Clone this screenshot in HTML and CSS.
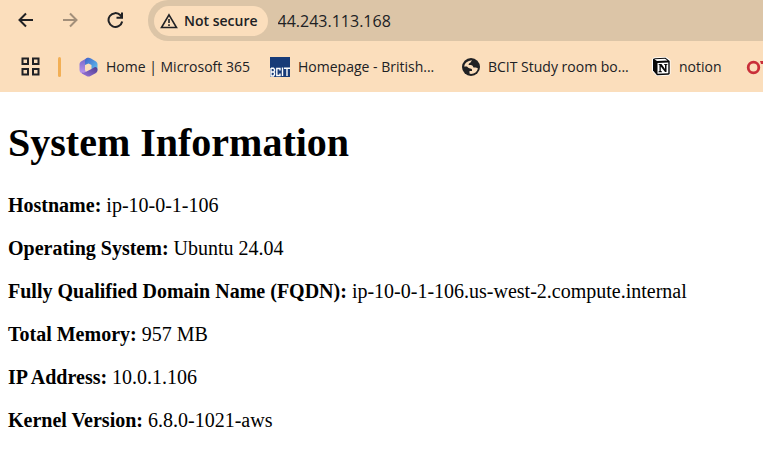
FILE: index.html
```html
<!DOCTYPE html>
<html lang="en">
<head>
<meta charset="utf-8">
<title>System Information</title>
<link rel="stylesheet" href="styles.css">
</head>
<body>
<header class="browser">
  <div class="toolbar">
    <button class="nav" type="button" aria-label="Back">
      <svg width="18" height="18" viewBox="0 0 18 18"><path d="M16 9H3M9 2.500L2.500 9L9 15.500"/></svg>
    </button>
    <button class="nav nav-off" type="button" aria-label="Forward" disabled>
      <svg width="18" height="18" viewBox="0 0 18 18"><path d="M1 9H14M8 2.500L14.500 9L8 15.500"/></svg>
    </button>
    <button class="nav" type="button" aria-label="Reload">
      <svg width="18" height="18" viewBox="0 0 18 18"><path d="M15.200 10.500A6.900 6.900 0 1 1 13.500 4.300L15 6M15 1.500V6.700H9.500"/></svg>
    </button>
    <div class="omnibox">
      <button class="security" type="button">
        <svg width="18" height="16" viewBox="0 0 18 16"><path d="M9 1.800L16.500 14.500H1.500Z"/><path d="M9 6V10M9 11.200V13"/></svg>
        <span>Not secure</span>
      </button>
      <input class="address" type="text" aria-label="Address" value="44.243.113.168">
    </div>
  </div>
  <nav class="bookmarks" aria-label="Bookmarks">
    <button class="apps" type="button" aria-label="Apps">
      <svg width="19" height="19" viewBox="0 0 19 19"><path d="M1.500 1.500H7V7H1.500ZM12 1.500H17.500V7H12ZM1.500 12H7V17.500H1.500ZM12 12H17.500V17.500H12Z"/></svg>
    </button>
    <span class="divider"></span>
    <a class="bookmark" href="#">
      <svg width="19" height="20" viewBox="0 0 19 20">
        <defs>
          <linearGradient id="top" x1="0" y1="0" x2="1" y2="1"><stop offset="0" stop-color="#3f62c8"/><stop offset="1" stop-color="#62c8f2"/></linearGradient>
          <linearGradient id="left" x1="0" y1="0" x2="0" y2="1"><stop offset="0" stop-color="#7165c6"/><stop offset="1" stop-color="#c39af0"/></linearGradient>
          <linearGradient id="low" x1="0" y1="1" x2="1" y2="0"><stop offset="0" stop-color="#9a75d8"/><stop offset="1" stop-color="#4c3b91"/></linearGradient>
        </defs>
        <path fill="url(#left)" d="M9 .5L2 4.500Q.5 5.500 .5 7V13Q.5 15 2 16L6 18Q8 18 7 15L6 13V7L11 4Z"/>
        <path fill="url(#top)" d="M7 1.500Q9.500 0 12 1.500L17 4.500Q18.500 5.500 18.500 7V13Q18 16 15 14L12.500 12V8L9.500 6.500L6 8V4Q6 2.500 7 1.500Z"/>
        <path fill="url(#low)" d="M3 15.500Q6 16 7.500 14.500L12.500 12L16 10Q18.500 10 18.500 13Q18.500 15 17 16L11.500 19Q9.500 20 7.500 19L3 16.500Z"/>
      </svg>
      <span class="label-long">Home | Microsoft 365</span>
    </a>
    <a class="bookmark" href="#">
      <svg width="20" height="20" viewBox="0 0 20 20"><path fill="#183b78" d="M0 0H20V20H0Z"/><path fill="none" stroke="#fff" stroke-width="1.400" d="M1 11V19H3.500L4.500 17.500V16L3.500 15L4.500 14V12.500L3.500 11.200H1M3.500 15H1M10 13.500V11.500H6.800V18.500H10V16.500M12.500 10.500V19M14 11.200H20M17 11V19"/></svg>
      <span class="label-long">Homepage - British...</span>
    </a>
    <a class="bookmark" href="#">
      <svg width="18" height="18" viewBox="0 0 18 18"><circle cx="9" cy="9" r="9" fill="#202124"/><path fill="#fbdebc" d="M10 2.200L8.500 4.500Q6.500 5 6.500 7H9Q11 7 11.500 9.500H14L16 10.500Q14.500 15.500 9 16L7.500 15.500V13H10V11.500Q9.500 10.500 8 10.500Q6 10 5 8.500H2.100Q3 3 10 2.200Z"/></svg>
      <span class="label-long">BCIT Study room bo...</span>
    </a>
    <a class="bookmark" href="#">
      <svg width="19" height="19" viewBox="0 0 19 19"><path fill="#fff" d="M0 2L2 .5L14 0L18.500 3V17L17 18.500L5 19L0 14Z"/><path fill="#080808" d="M1 2L3 1.300L13.500 .8L17.700 4V17L16.500 17.700L5 18.200L1 13.500Z"/><path fill="#fff" d="M2.500 2.300L13 1.800L15.500 3.600L5 4.100ZM5.500 6L16.300 5.400V16.200L5.500 16.800Z"/><path fill="#080808" d="M6.500 7H9.500L13 12V8L12 7.500V7H15.500V7.500L14.500 8V15H13L8.800 9.500V14L10 14.500V15.200H6.500V14.500L7.500 14V8L6.500 7.500Z"/></svg>
      <span>notion</span>
    </a>
    <a class="bookmark" href="#" aria-label="Next bookmark">
      <svg width="24" height="18" viewBox="0 0 24 18"><circle cx="11.500" cy="9.500" r="5.300" fill="none" stroke="#c92f39" stroke-width="2.800"/><path fill="#c92f39" d="M18 3H24V6H19Z"/></svg>
    </a>
  </nav>
</header>
<main class="page">
  <h1>System Information</h1>
  <p><strong>Hostname:</strong> ip-10-0-1-106</p>
  <p><strong>Operating System:</strong> Ubuntu 24.04</p>
  <p><strong>Fully Qualified Domain Name (FQDN):</strong> ip-10-0-1-106.us-west-2.compute.internal</p>
  <p><strong>Total Memory:</strong> 957 MB</p>
  <p><strong>IP Address:</strong> 10.0.1.106</p>
  <p><strong>Kernel Version:</strong> 6.8.0-1021-aws</p>
</main>
</body>
</html>
```
FILE: styles.css
```css
* {
  box-sizing: border-box;
}

body {
  margin: 0;
  background: #fff;
  color: #000;
  font-family: "Liberation Serif", serif;
  font-size: 20px;
  line-height: 23px;
}

button,
input {
  margin: 0;
  padding: 0;
  border: 0;
  background: none;
  color: inherit;
  font: inherit;
}

svg {
  display: block;
  flex: none;
}

.browser {
  overflow: hidden;
  background: #fbdebc;
  color: #202124;
  font-family: "Open Sans", sans-serif;
  font-size: 14px;
  line-height: 20px;
}

.toolbar {
  display: flex;
  align-items: flex-start;
  padding-left: 17px;
}

.nav {
  flex: none;
  width: 18px;
  height: 39px;
  margin-right: 27px;
}

.nav svg,
.security svg,
.apps svg {
  fill: none;
  stroke: #202124;
  stroke-width: 2;
}

.nav-off svg {
  stroke: #a28f7a;
}

.omnibox {
  display: flex;
  flex: 1;
  align-items: center;
  height: 41px;
  margin-left: -4px;
  padding-left: 6px;
  border-radius: 20px 0 0 20px;
  background: #dcc5a7;
}

.security {
  display: flex;
  flex: none;
  align-items: center;
  gap: 6px;
  height: 30px;
  padding: 0 10px 0 6px;
  border-radius: 15px;
  background: #fbdebc;
  font-weight: 600;
}

.security svg {
  stroke-width: 1.6;
}

.address {
  flex: 1;
  min-width: 0;
  margin-left: 10px;
  font-size: 16px;
}

.bookmarks {
  display: flex;
  align-items: center;
  height: 51px;
  padding-left: 21px;
}

.apps {
  flex: none;
}

.divider {
  flex: none;
  width: 3px;
  height: 20px;
  margin: 0 18px;
  border-radius: 2px;
  background: #f2af55;
}

.bookmark {
  display: flex;
  flex: none;
  align-items: center;
  gap: 8px;
  margin-right: 20px;
  color: inherit;
  text-decoration: none;
  white-space: nowrap;
}

.label-long {
  min-width: 144px;
}

.page {
  padding: 0 8px;
}

h1 {
  margin: 28px 0;
  font-size: 40px;
  line-height: 46px;
}

p {
  margin: 0 0 20px;
}
```
